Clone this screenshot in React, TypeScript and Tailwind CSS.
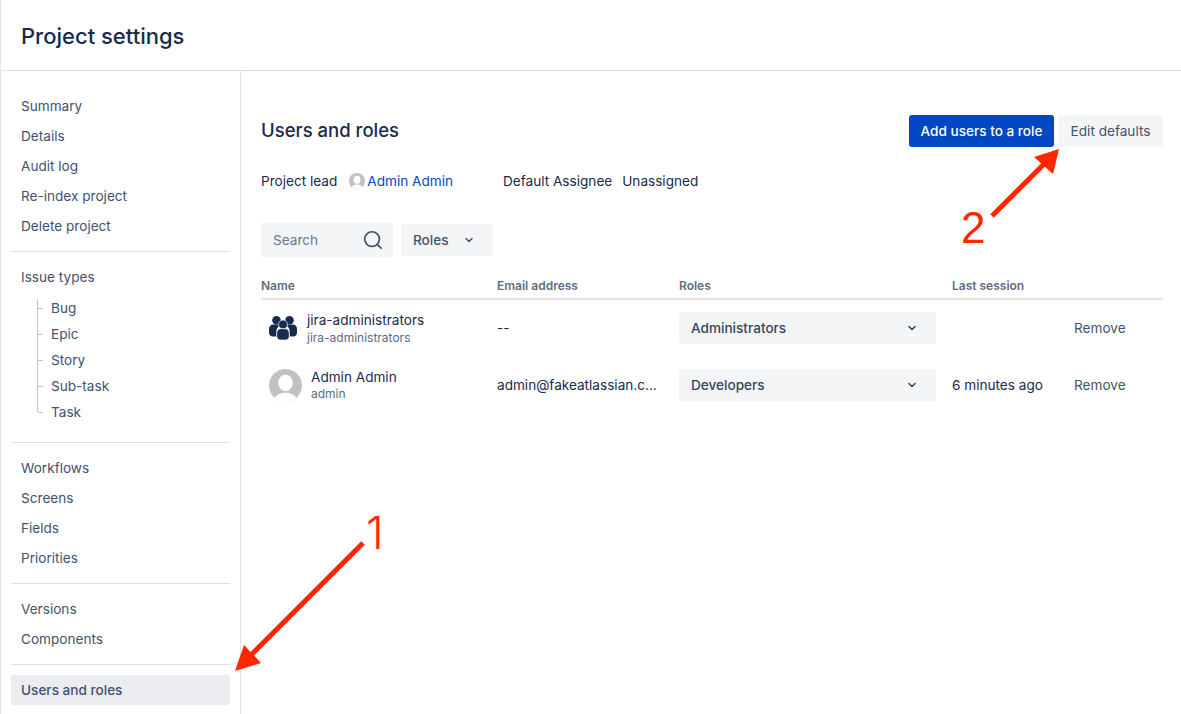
import { ChevronDown, Search } from "lucide-react";

const navGroupTop = ["Summary", "Details", "Audit log", "Re-index project", "Delete project"];
const issueTypes = ["Bug", "Epic", "Story", "Sub-task", "Task"];
const navGroupFlow = ["Workflows", "Screens", "Fields", "Priorities"];
const navGroupRelease = ["Versions", "Components"];

const NavItem = ({ label, active = false }: { label: string; active?: boolean }) => (
  <li
    className={`h-[30px] leading-[30px] px-[10px] rounded-[3px] ${
      active ? "bg-[#ebecf0] font-medium" : ""
    }`}
  >
    {label}
  </li>
);

const Divider = () => <div className="h-px bg-[#dfe1e6]" />;

const Avatar = ({ size }: { size: number }) => (
  <svg width={size} height={size} viewBox="0 0 32 32" className="shrink-0">
    <defs>
      <clipPath id={`avatar-${size}`}>
        <circle cx="16" cy="16" r="16" />
      </clipPath>
    </defs>
    <g clipPath={`url(#avatar-${size})`}>
      <rect width="32" height="32" fill="#c1c1c1" />
      <ellipse cx="16" cy="13.5" rx="7" ry="8" fill="#ffffff" />
      <path d="M3 34c1-8 7-11 13-11s12 3 13 11z" fill="#ffffff" />
    </g>
  </svg>
);

const GroupIcon = () => (
  <svg width="28" height="24" viewBox="0 0 28 24" className="shrink-0" fill="#172b4d">
    <circle cx="7.5" cy="4.3" r="4.300" />
    <circle cx="20.5" cy="4.3" r="4.300" />
    <path d="M0 13c0-3 2-4.600 4-4.600h5c1 0 2 .5 2 1-2 1-3.500 3-3.500 5.200v5.900H4c-2.400 0-4-1.600-4-3.500z" />
    <path d="M28 13c0-3-2-4.600-4-4.600h-5c-1 0-2 .5-2 1 2 1 3.500 3 3.500 5.200v5.900H24c2.400 0 4-1.600 4-3.500z" />
    <circle cx="14" cy="8.500" r="4.500" stroke="#ffffff" strokeWidth="0.7" />
    <path
      d="M7.800 17c0-2.800 2-4.300 4-4.300h4.400c2 0 4 1.500 4 4.300v3.500c0 2.200-1.800 3.500-3.600 3.500h-5.200c-1.800 0-3.600-1.300-3.600-3.500z"
      stroke="#ffffff"
      strokeWidth="0.7"
    />
  </svg>
);

const RoleSelect = ({ role }: { role: string }) => (
  <div className="w-[257px] h-8 rounded-[3px] bg-[#f4f5f7] flex items-center justify-between pl-3 pr-[18px] font-medium text-[#344563]">
    <span>{role}</span>
    <ChevronDown size={12} strokeWidth={3} />
  </div>
);

const rowGrid = "grid grid-cols-[236px_182px_273px_122px_1fr] items-center";

export default function App() {
  return (
    <div className="relative h-[714px] overflow-hidden bg-white border-l border-[#e4e6ea] text-[13.6px] text-[#172b4d] font-['Inter',sans-serif]">
      <header className="h-[71px] border-b border-[#dfe1e6] flex items-center pl-5 pt-[3px]">
        <h1 className="text-[22px] font-medium">Project settings</h1>
      </header>

      <div className="flex h-[643px]">
        {/* Sidebar */}
        <aside className="w-[240px] shrink-0 border-r border-[#dfe1e6] pl-[10px] pr-[10px] pt-5 text-[#42526e]">
          <ul>
            {navGroupTop.map((item) => (
              <NavItem key={item} label={item} />
            ))}
          </ul>
          <div className="mt-[10px]">
            <Divider />
          </div>
          <div className="mt-[10px] h-[30px] leading-[30px] px-[10px]">Issue types</div>
          <ul className="ml-[26px] mt-[3px]">
            {issueTypes.map((item, idx) => (
              <li key={item} className="flex h-[26px]">
                <div
                  className={`w-px bg-[#c1c7d0] ${
                    idx === 0 ? "h-[22px] mt-1" : idx === issueTypes.length - 1 ? "h-[13px]" : "h-full"
                  }`}
                />
                <div className="w-[5px] h-px mt-[13px] bg-[#c1c7d0]" />
                <span className="ml-2 leading-[26px]">{item}</span>
              </li>
            ))}
          </ul>
          <div className="mt-[17px]">
            <Divider />
          </div>
          <ul className="mt-[10px]">
            {navGroupFlow.map((item) => (
              <NavItem key={item} label={item} />
            ))}
          </ul>
          <div className="mt-[10px]">
            <Divider />
          </div>
          <ul className="mt-[10px]">
            {navGroupRelease.map((item) => (
              <NavItem key={item} label={item} />
            ))}
          </ul>
          <div className="mt-[10px]">
            <Divider />
          </div>
          <ul className="mt-[10px]">
            <NavItem label="Users and roles" active />
          </ul>
        </aside>

        {/* Main content */}
        <main className="flex-1 pl-5 pr-[18px] pt-[44px]">
          <div className="flex items-center justify-between h-8">
            <h2 className="text-[18.5px] font-medium">Users and roles</h2>
            <div className="flex gap-1">
              <button className="h-8 w-[145px] rounded-[3px] bg-[#0047c4] text-white font-medium">
                Add users to a role
              </button>
              <button className="h-8 w-[105px] rounded-[3px] bg-[#f4f5f7] text-[#42526e]">
                Edit defaults
              </button>
            </div>
          </div>

          <div className="flex items-center mt-6 h-5">
            <span>Project lead</span>
            <span className="ml-3">
              <Avatar size={16} />
            </span>
            <a className="ml-[2px] text-[#0047c4]">Admin Admin</a>
            <span className="ml-[50px]">Default Assignee</span>
            <span className="ml-[10px]">Unassigned</span>
          </div>

          <div className="flex items-center gap-2 mt-8">
            <div className="w-[132px] h-[34px] rounded-[3px] bg-[#f4f5f7] flex items-center justify-between pl-3 pr-[9px] text-[#6b778c]">
              <span>Search</span>
              <Search size={22} strokeWidth={1.9} className="text-[#42526e]" />
            </div>
            <div className="w-[92px] h-8 rounded-[3px] bg-[#f4f5f7] flex items-center pl-3 font-medium text-[#42526e]">
              <span>Roles</span>
              <ChevronDown size={12} strokeWidth={3} className="ml-[14px]" />
            </div>
          </div>

          <div className={`${rowGrid} mt-5 h-[23px] border-b-2 border-[#dfe1e6] pb-[5px] text-[12px] font-semibold text-[#5e6c84]`}>
            <span>Name</span>
            <span>Email address</span>
            <span>Roles</span>
            <span>Last session</span>
            <span />
          </div>

          <div className="flex flex-col gap-px">
            <div className={`${rowGrid} h-14`}>
              <div className="flex items-center pl-2">
                <GroupIcon />
                <div className="ml-[10px] mt-[2px]">
                  <div className="leading-[18px]">jira-administrators</div>
                  <div className="text-[12px] leading-[18px] text-[#5e6c84]">jira-administrators</div>
                </div>
              </div>
              <span>--</span>
              <RoleSelect role="Administrators" />
              <span />
              <span className="text-[#42526e]">Remove</span>
            </div>

            <div className={`${rowGrid} h-14`}>
              <div className="flex items-center pl-2">
                <Avatar size={33} />
                <div className="ml-[9px]">
                  <div className="leading-[18px]">Admin Admin</div>
                  <div className="text-[12px] leading-[16px] text-[#5e6c84]">admin</div>
                </div>
              </div>
              <span>admin@fakeatlassian.c...</span>
              <RoleSelect role="Developers" />
              <span>6 minutes ago</span>
              <span className="text-[#42526e]">Remove</span>
            </div>
          </div>
        </main>
      </div>

      {/* Red callouts drawn on top of the screenshot */}
      <svg className="absolute inset-0 pointer-events-none" width="1181" height="714" viewBox="0 0 1181 714">
        <line x1="362" y1="543" x2="248" y2="657" stroke="#ff2600" strokeWidth="5" />
        <polygon points="234,671 243,645 260,663" fill="#ff2600" />
        <line x1="991" y1="216" x2="1045" y2="162" stroke="#ff2600" strokeWidth="5" />
        <polygon points="1058,149 1033,157 1052,174" fill="#ff2600" />
      </svg>
      <span className="absolute left-[365px] top-[508px] text-[45px] font-light leading-[50px] text-[#ff2600]">
        1
      </span>
      <span className="absolute left-[960px] top-[203px] text-[44px] leading-[50px] text-[#ff2600] font-['Liberation_Sans',sans-serif]">
        2
      </span>
    </div>
  );
}
